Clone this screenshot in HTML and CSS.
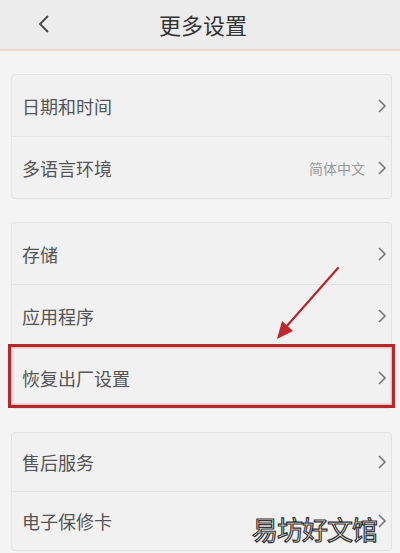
FILE: index.html
```html
<!DOCTYPE html>
<html lang="zh-CN">
<head>
    <meta charset="UTF-8">
    <meta name="viewport" content="width=device-width, initial-scale=1.0">
    <title>更多设置</title>
    <link rel="stylesheet" href="styles.css">
</head>
<body>

    <div class="header">
        <svg class="back" width="12" height="20" viewBox="0 0 12 20">
            <polyline points="10,2 2,10 10,18" fill="none" stroke="#444" stroke-width="1.8"/>
        </svg>
        <div class="title">更多设置</div>
    </div>

    <div class="content">
        <div class="card">
            <div class="row">
                <span class="label">日期和时间</span>
                <svg class="chev" width="10" height="16" viewBox="0 0 10 16"><polyline points="2,2 8,8 2,14"/></svg>
            </div>
            <div class="row">
                <span class="label">多语言环境</span>
                <span class="value">简体中文</span>
                <svg class="chev" width="10" height="16" viewBox="0 0 10 16"><polyline points="2,2 8,8 2,14"/></svg>
            </div>
        </div>

        <div class="card">
            <div class="row">
                <span class="label">存储</span>
                <svg class="chev" width="10" height="16" viewBox="0 0 10 16"><polyline points="2,2 8,8 2,14"/></svg>
            </div>
            <div class="row">
                <span class="label">应用程序</span>
                <svg class="chev" width="10" height="16" viewBox="0 0 10 16"><polyline points="2,2 8,8 2,14"/></svg>
            </div>
            <div class="row marked">
                <span class="label">恢复出厂设置</span>
                <svg class="chev" width="10" height="16" viewBox="0 0 10 16"><polyline points="2,2 8,8 2,14"/></svg>
                <div class="mark-box"></div>
                <!-- hand-drawn pointer arrow -->
                <svg class="arrow" width="70" height="80" viewBox="0 0 70 80">
                    <line x1="66" y1="3" x2="14" y2="62" stroke="#b8252b" stroke-width="2.2" stroke-linecap="round"/>
                    <polygon points="5,74 10,56 21,66" fill="#c0282d"/>
                </svg>
            </div>
        </div>

        <div class="card">
            <div class="row">
                <span class="label">售后服务</span>
                <svg class="chev" width="10" height="16" viewBox="0 0 10 16"><polyline points="2,2 8,8 2,14"/></svg>
            </div>
            <div class="row">
                <span class="label">电子保修卡</span>
                <svg class="chev" width="10" height="16" viewBox="0 0 10 16"><polyline points="2,2 8,8 2,14"/></svg>
            </div>
        </div>
    </div>

    <div class="watermark">易坊好文馆</div>

</body>
</html>
```

FILE: styles.css
```css
body {
    font-family: "Noto Sans CJK SC", "Noto Sans", sans-serif;
    background-color: #f4f4f4;
    color: #555;
    margin: 0;
    padding: 0;
    height: 553px;
    overflow: hidden;
    position: relative;
}

.header {
    height: 49px;
    background-color: #ececec;
    border-bottom: 2px solid #efd3c4;
    display: flex;
    align-items: center;
    justify-content: center;
    position: relative;
}

.back {
    position: absolute;
    left: 38px;
    top: 14px;
}

.title {
    font-size: 22px;
    color: #333;
    margin: -2px 0 0 6px;
}

.content {
    padding: 23px 8px 0 11px;
    display: flex;
    flex-direction: column;
    gap: 23px;
}

.card {
    background-color: #f1f1f1;
    border: 1px solid #e2e2e2;
    border-radius: 4px;
}

.row {
    height: 61px;
    display: flex;
    align-items: center;
    padding: 0 4px 0 10px;
    border-top: 1px solid #e4e4e4;
    position: relative;
}

.row:first-child {
    border-top: none;
}

.card:last-child .row {
    height: 58px;
}

.label {
    font-size: 18px;
    color: #555;
    flex: 1;
}

.value {
    font-size: 14px;
    color: #999;
    margin-right: 12px;
}

.chev polyline {
    fill: none;
    stroke: #777;
    stroke-width: 1.6;
}

.mark-box {
    position: absolute;
    left: -4px;
    right: -4px;
    top: -3px;
    bottom: 0;
    border: 3px solid #b8252b;
    box-shadow: inset 0 0 2px 1px #f0b0b0;
}

.arrow {
    position: absolute;
    left: 260px;
    top: -82px;
}

.watermark {
    position: absolute;
    left: 252px;
    top: 510px;
    font-size: 26px;
    color: #fff;
    -webkit-text-stroke: 1.2px #333;
    letter-spacing: -1px;
}
```
